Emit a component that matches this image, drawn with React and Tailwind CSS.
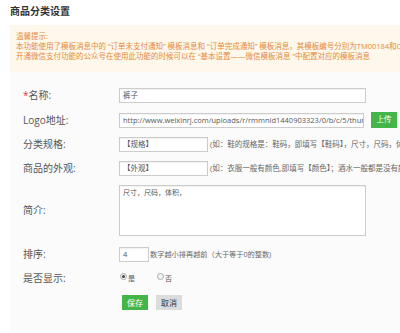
import React from 'react';

const font = { fontFamily: '"Open Sans", "Noto Sans CJK SC", sans-serif' };

const Label = ({ children, required }) => (
    <div className="w-[109px] shrink-0 pl-[13px] text-[10px] text-[#555] whitespace-nowrap">
        {required && <span className="text-[#e4393c]">*</span>}
        {children}
    </div>
);

const Hint = ({ children }) => (
    <span className="ml-[2px] text-[7.5px] text-[#666] whitespace-nowrap">{children}</span>
);

const inputCls = 'h-[15px] shrink-0 border border-[#ccc] bg-white px-[3px] text-[7.5px] leading-[13px] text-[#555] shadow-[inset_0_1px_1px_rgba(0,0,0,0.06)] whitespace-nowrap overflow-hidden';

const Radio = ({ checked, label }) => (
    <div className="flex items-start gap-[1px]">
        <span className="mt-[-1px] flex h-[7px] w-[7px] items-center justify-center rounded-full border border-[#aaa] bg-[#f4f4f4]">
            {checked && <span className="h-[3px] w-[3px] rounded-full bg-[#444]" />}
        </span>
        <span className="mt-[1px] text-[7px] leading-[8px] text-[#555]">{label}</span>
    </div>
);

export default function App() {
    return (
        <div className="w-[400px] h-[333px] bg-white overflow-hidden flex flex-col" style={font}>
            {/* 标题 */}
            <div className="h-[24px] pl-[10px] pt-[4px] text-[10px] font-bold text-[#333] leading-[14px]">商品分类设置</div>

            {/* 温馨提示 */}
            <div className="ml-[10px] mt-[1px] h-[47px] bg-[#fdf8eb] pl-[6px] pt-[6px] text-[7.5px] leading-[10px] text-[#e58a3c] whitespace-nowrap overflow-hidden">
                <div>温馨提示:</div>
                <div>本功能使用了模板消息中的 “订单未支付通知” 模板消息和 “订单完成通知” 模板消息，其模板编号分别为TM00184和OPENTM200677</div>
                <div>开通微信支付功能的公众号在使用此功能的时候可以在 “基本设置——微信模板消息 ”中配置对应的模板消息</div>
            </div>

            {/* 表单 */}
            <div className="ml-[10px] flex-1 bg-[#fbfbfb] pt-[16px] flex flex-col overflow-hidden">
                <div className="flex items-center">
                    <Label required>名称:</Label>
                    <div className={`${inputCls} w-[247px]`}>裤子</div>
                </div>

                <div className="mt-[9px] flex items-center">
                    <Label>Logo地址:</Label>
                    <div className={`${inputCls} w-[245px]`}>http://www.weixinrj.com/uploads/r/rmmnld1440903323/0/b/c/5/thumb_55e26d3b5b3c5.jpg</div>
                    <button className="ml-[7px] h-[16px] w-[26px] shrink-0 bg-[#44b549] px-0 text-[7.5px] text-white">上传</button>
                </div>

                <div className="mt-[9px] flex items-center">
                    <Label>分类规格:</Label>
                    <div className={`${inputCls} w-[89px]`}>【规格】</div>
                    <Hint>(如：鞋的规格是：鞋码，即填写【鞋码】，尺寸，尺码，体积</Hint>
                </div>

                <div className="mt-[9px] flex items-center">
                    <Label>商品的外观:</Label>
                    <div className={`${inputCls} w-[89px]`}>【外观】</div>
                    <Hint>(如：衣服一般有颜色,即填写【颜色】；酒水一般都是没有颜色</Hint>
                </div>

                <div className="mt-[9px] flex items-center">
                    <Label>简介:</Label>
                    <div className="h-[51px] w-[247px] border border-[#ccc] bg-white px-[3px] pt-[2px] text-[7px] leading-[10px] text-[#555] shadow-[inset_0_1px_1px_rgba(0,0,0,0.06)]">尺寸，尺码，体积，</div>
                </div>

                <div className="mt-[11px] flex items-center">
                    <Label>排序:</Label>
                    <div className={`${inputCls} w-[30px]`}>4</div>
                    <span className="ml-[1px] text-[7.2px] text-[#666] whitespace-nowrap">数字越小排再越前（大于等于0的整数)</span>
                </div>

                <div className="mt-[9px] flex items-center h-[14px]">
                    <Label>是否显示:</Label>
                    <div className="flex gap-[22px] pl-[1px]">
                        <Radio checked label="是" />
                        <Radio label="否" />
                    </div>
                </div>

                <div className="mt-[10px] flex pl-[112px] gap-[8px]">
                    <button className="h-[15px] w-[26px] bg-[#44b549] text-[8px] text-white">保存</button>
                    <button className="h-[15px] w-[26px] bg-[#dcdcdc] text-[8px] text-[#333]">取消</button>
                </div>
            </div>
        </div>
    );
}
